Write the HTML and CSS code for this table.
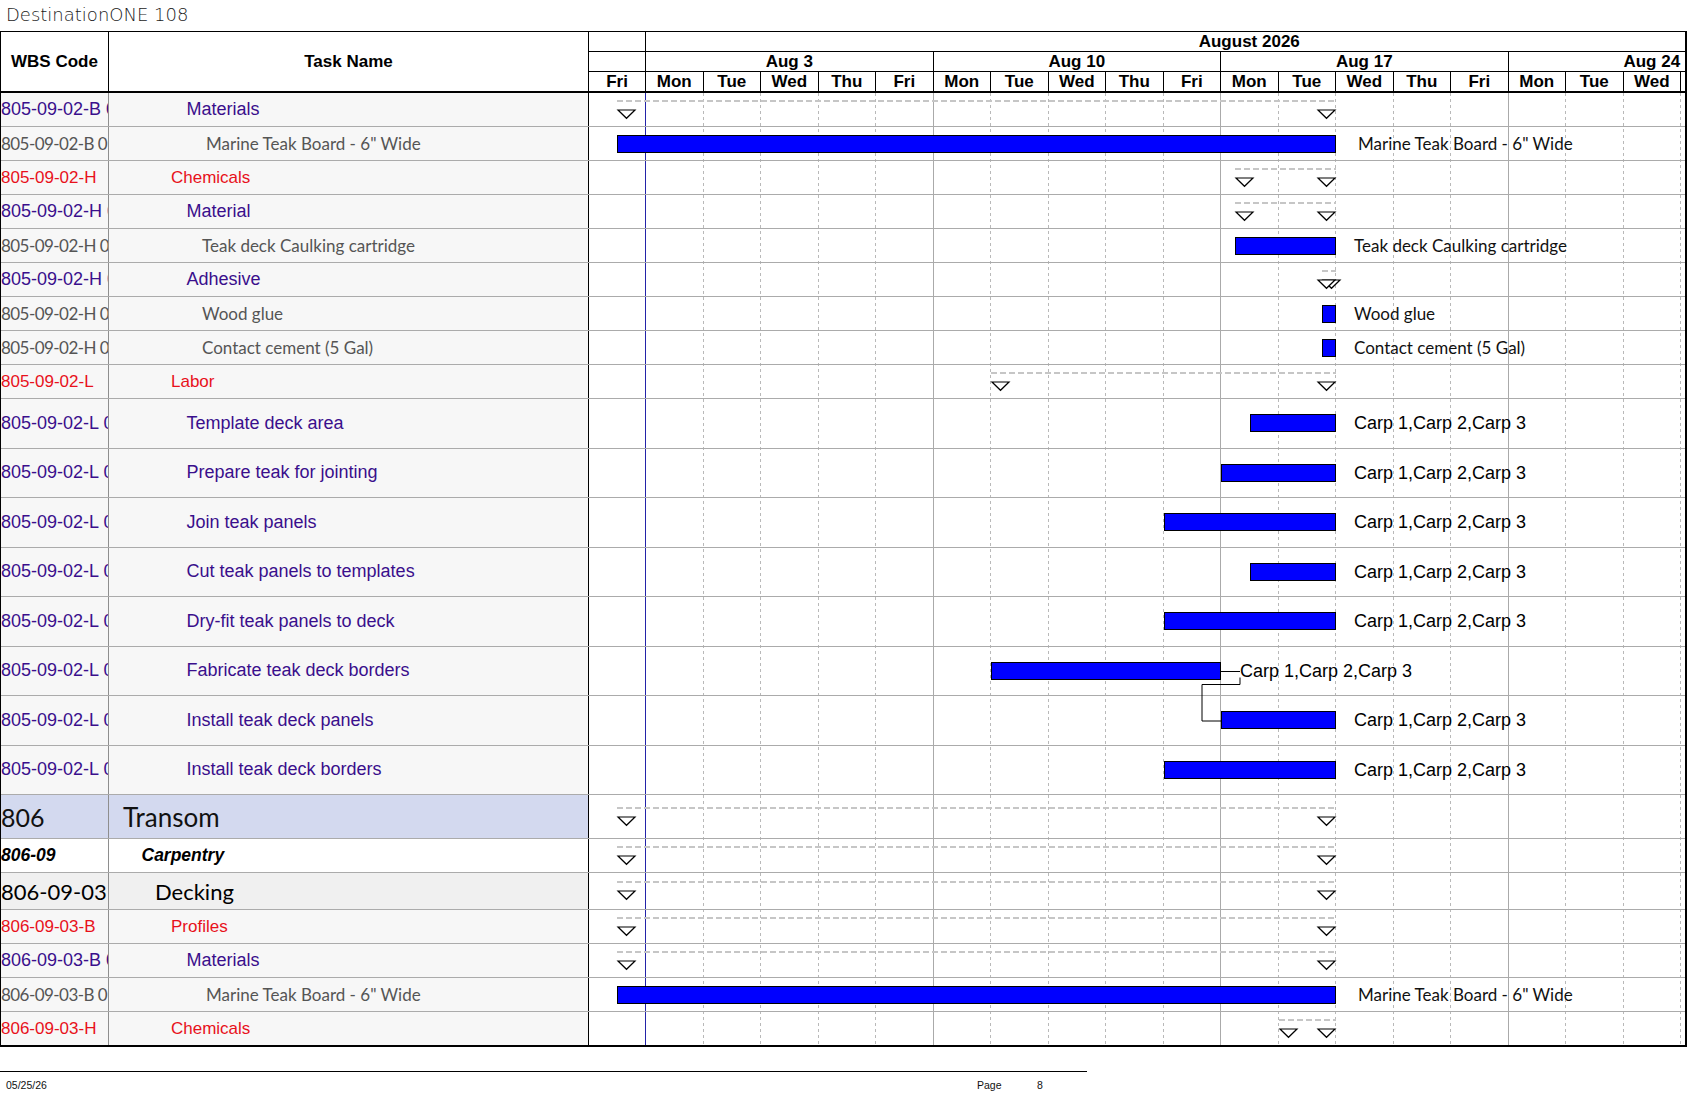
FILE: index.html
```html
<!DOCTYPE html>
<html lang="en">
<head>
<meta charset="utf-8">
<title>DestinationONE 108</title>
<link rel="stylesheet" href="styles.css">
</head>
<body>
<div class="title">DestinationONE 108</div>
<div class="sheet">
  <div class="left">
    <div class="lhead">
      <div class="hc wbs">WBS Code</div>
      <div class="hc task">Task Name</div>
    </div>
    <div class="lrow h34"><div class="c pur">805-09-02-B 01</div><div class="t pur i-pur">Materials</div></div>
    <div class="lrow h34"><div class="c gry">805-09-02-B 0101</div><div class="t gry i-gry2">Marine Teak Board - 6" Wide</div></div>
    <div class="lrow h34"><div class="c red">805-09-02-H</div><div class="t red i-red">Chemicals</div></div>
    <div class="lrow h34"><div class="c pur">805-09-02-H 01</div><div class="t pur i-pur">Material</div></div>
    <div class="lrow h34"><div class="c gry">805-09-02-H 0101</div><div class="t gry i-gry">Teak deck Caulking cartridge</div></div>
    <div class="lrow h34"><div class="c pur">805-09-02-H 02</div><div class="t pur i-pur">Adhesive</div></div>
    <div class="lrow h34"><div class="c gry">805-09-02-H 0201</div><div class="t gry i-gry">Wood glue</div></div>
    <div class="lrow h34"><div class="c gry">805-09-02-H 0202</div><div class="t gry i-gry">Contact cement (5 Gal)</div></div>
    <div class="lrow h34"><div class="c red">805-09-02-L</div><div class="t red i-red">Labor</div></div>
    <div class="lrow h49"><div class="c pur">805-09-02-L 01</div><div class="t pur i-pur">Template deck area</div></div>
    <div class="lrow h49"><div class="c pur">805-09-02-L 02</div><div class="t pur i-pur">Prepare teak for jointing</div></div>
    <div class="lrow h49"><div class="c pur">805-09-02-L 03</div><div class="t pur i-pur">Join teak panels</div></div>
    <div class="lrow h49"><div class="c pur">805-09-02-L 04</div><div class="t pur i-pur">Cut teak panels to templates</div></div>
    <div class="lrow h49"><div class="c pur">805-09-02-L 05</div><div class="t pur i-pur">Dry-fit teak panels to deck</div></div>
    <div class="lrow h49"><div class="c pur">805-09-02-L 06</div><div class="t pur i-pur">Fabricate teak deck borders</div></div>
    <div class="lrow h49"><div class="c pur">805-09-02-L 07</div><div class="t pur i-pur">Install teak deck panels</div></div>
    <div class="lrow h49"><div class="c pur">805-09-02-L 08</div><div class="t pur i-pur">Install teak deck borders</div></div>
    <div class="lrow h44 bg-l1"><div class="c l1">806</div><div class="t l1 i-l1">Transom</div></div>
    <div class="lrow h34 bg-l2"><div class="c l2">806-09</div><div class="t l2 i-l2">Carpentry</div></div>
    <div class="lrow h37 bg-l3"><div class="c l3">806-09-03</div><div class="t l3 i-l3">Decking</div></div>
    <div class="lrow h34"><div class="c red">806-09-03-B</div><div class="t red i-red">Profiles</div></div>
    <div class="lrow h34"><div class="c pur">806-09-03-B 01</div><div class="t pur i-pur">Materials</div></div>
    <div class="lrow h34"><div class="c gry">806-09-03-B 0101</div><div class="t gry i-gry2">Marine Teak Board - 6" Wide</div></div>
    <div class="lrow h34"><div class="c red">806-09-03-H</div><div class="t red i-red">Chemicals</div></div>
  </div>

  <div class="chart">
    <div class="chead">
      <div class="hrow m">
        <div class="hcell w-fri"></div>
        <div class="hcell w-month">August 2026</div>
      </div>
      <div class="hrow w">
        <div class="hcell w-fri"></div>
        <div class="hcell w-week">Aug 3</div>
        <div class="hcell w-week">Aug 10</div>
        <div class="hcell w-week">Aug 17</div>
        <div class="hcell w-week">Aug 24</div>
      </div>
      <div class="hrow d">
        <div class="hcell w-fri">Fri</div>
        <div class="hcell w-day">Mon</div><div class="hcell w-day">Tue</div><div class="hcell w-day">Wed</div><div class="hcell w-day">Thu</div><div class="hcell w-day">Fri</div>
        <div class="hcell w-day">Mon</div><div class="hcell w-day">Tue</div><div class="hcell w-day">Wed</div><div class="hcell w-day">Thu</div><div class="hcell w-day">Fri</div>
        <div class="hcell w-day">Mon</div><div class="hcell w-day">Tue</div><div class="hcell w-day">Wed</div><div class="hcell w-day">Thu</div><div class="hcell w-day">Fri</div>
        <div class="hcell w-day">Mon</div><div class="hcell w-day">Tue</div><div class="hcell w-day">Wed</div><div class="hcell w-day">Thu</div>
      </div>
    </div>

    <div class="cbody">
      <div class="cgrid">
        <div class="gcol first today"></div>
        <div class="gcol"></div><div class="gcol"></div><div class="gcol"></div><div class="gcol"></div><div class="gcol wk"></div>
        <div class="gcol"></div><div class="gcol"></div><div class="gcol"></div><div class="gcol"></div><div class="gcol wk"></div>
        <div class="gcol"></div><div class="gcol"></div><div class="gcol"></div><div class="gcol"></div><div class="gcol wk"></div>
        <div class="gcol"></div><div class="gcol"></div><div class="gcol"></div><div class="gcol"></div>
      </div>

      <div class="crow h34"><div class="sum" style="left:28.25px;width:718.75px"><svg class="tri s" viewBox="0 0 19 10"><path d="M1 1H18L9.5 9.3Z"/></svg><svg class="tri e" viewBox="0 0 19 10"><path d="M1 1H18L9.5 9.3Z"/></svg></div></div>
      <div class="crow h34"><div class="bar" style="left:28.25px;width:718.75px"></div><div class="lbl cal" style="left:769px">Marine Teak Board - 6" Wide</div></div>
      <div class="crow h34"><div class="sum" style="left:646.4px;width:100.6px"><svg class="tri s" viewBox="0 0 19 10"><path d="M1 1H18L9.5 9.3Z"/></svg><svg class="tri e" viewBox="0 0 19 10"><path d="M1 1H18L9.5 9.3Z"/></svg></div></div>
      <div class="crow h34"><div class="sum" style="left:646.4px;width:100.6px"><svg class="tri s" viewBox="0 0 19 10"><path d="M1 1H18L9.5 9.3Z"/></svg><svg class="tri e" viewBox="0 0 19 10"><path d="M1 1H18L9.5 9.3Z"/></svg></div></div>
      <div class="crow h34"><div class="bar" style="left:646.4px;width:100.6px"></div><div class="lbl cal" style="left:765px">Teak deck Caulking cartridge</div></div>
      <div class="crow h34"><div class="sum" style="left:732.6px;width:14.4px"><svg class="tri s" viewBox="0 0 19 10"><path d="M1 1H18L9.5 9.3Z"/></svg><svg class="tri e" viewBox="0 0 19 10"><path d="M1 1H18L9.5 9.3Z"/></svg></div></div>
      <div class="crow h34"><div class="bar" style="left:732.6px;width:14.4px"></div><div class="lbl cal" style="left:765px">Wood glue</div></div>
      <div class="crow h34"><div class="bar" style="left:732.6px;width:14.4px"></div><div class="lbl cal" style="left:765px">Contact cement (5 Gal)</div></div>
      <div class="crow h34"><div class="sum" style="left:402px;width:345px"><svg class="tri s" viewBox="0 0 19 10"><path d="M1 1H18L9.5 9.3Z"/></svg><svg class="tri e" viewBox="0 0 19 10"><path d="M1 1H18L9.5 9.3Z"/></svg></div></div>
      <div class="crow h49"><div class="bar" style="left:660.75px;width:86.25px"></div><div class="lbl" style="left:765px">Carp 1,Carp 2,Carp 3</div></div>
      <div class="crow h49"><div class="bar" style="left:632px;width:115px"></div><div class="lbl" style="left:765px">Carp 1,Carp 2,Carp 3</div></div>
      <div class="crow h49"><div class="bar" style="left:574.5px;width:172.5px"></div><div class="lbl" style="left:765px">Carp 1,Carp 2,Carp 3</div></div>
      <div class="crow h49"><div class="bar" style="left:660.75px;width:86.25px"></div><div class="lbl" style="left:765px">Carp 1,Carp 2,Carp 3</div></div>
      <div class="crow h49"><div class="bar" style="left:574.5px;width:172.5px"></div><div class="lbl" style="left:765px">Carp 1,Carp 2,Carp 3</div></div>
      <div class="crow h49">
        <div class="bar" style="left:402px;width:230px"></div>
        <svg class="link" viewBox="0 0 60 80"><path d="M32 24.5H51M51 30.5V37.5H13V74H32"/></svg>
        <div class="lbl" style="left:651px">Carp 1,Carp 2,Carp 3</div>
      </div>
      <div class="crow h49"><div class="bar" style="left:632px;width:115px"></div><div class="lbl" style="left:765px">Carp 1,Carp 2,Carp 3</div></div>
      <div class="crow h49"><div class="bar" style="left:574.5px;width:172.5px"></div><div class="lbl" style="left:765px">Carp 1,Carp 2,Carp 3</div></div>
      <div class="crow h44"><div class="sum" style="left:28.25px;width:718.75px"><svg class="tri s" viewBox="0 0 19 10"><path d="M1 1H18L9.5 9.3Z"/></svg><svg class="tri e" viewBox="0 0 19 10"><path d="M1 1H18L9.5 9.3Z"/></svg></div></div>
      <div class="crow h34"><div class="sum" style="left:28.25px;width:718.75px"><svg class="tri s" viewBox="0 0 19 10"><path d="M1 1H18L9.5 9.3Z"/></svg><svg class="tri e" viewBox="0 0 19 10"><path d="M1 1H18L9.5 9.3Z"/></svg></div></div>
      <div class="crow h37"><div class="sum" style="left:28.25px;width:718.75px"><svg class="tri s" viewBox="0 0 19 10"><path d="M1 1H18L9.5 9.3Z"/></svg><svg class="tri e" viewBox="0 0 19 10"><path d="M1 1H18L9.5 9.3Z"/></svg></div></div>
      <div class="crow h34"><div class="sum" style="left:28.25px;width:718.75px"><svg class="tri s" viewBox="0 0 19 10"><path d="M1 1H18L9.5 9.3Z"/></svg><svg class="tri e" viewBox="0 0 19 10"><path d="M1 1H18L9.5 9.3Z"/></svg></div></div>
      <div class="crow h34"><div class="sum" style="left:28.25px;width:718.75px"><svg class="tri s" viewBox="0 0 19 10"><path d="M1 1H18L9.5 9.3Z"/></svg><svg class="tri e" viewBox="0 0 19 10"><path d="M1 1H18L9.5 9.3Z"/></svg></div></div>
      <div class="crow h34"><div class="bar" style="left:28.25px;width:718.75px"></div><div class="lbl cal" style="left:769px">Marine Teak Board - 6" Wide</div></div>
      <div class="crow h34"><div class="sum" style="left:689.5px;width:57.5px"><svg class="tri s" viewBox="0 0 19 10"><path d="M1 1H18L9.5 9.3Z"/></svg><svg class="tri e" viewBox="0 0 19 10"><path d="M1 1H18L9.5 9.3Z"/></svg></div></div>
    </div>
  </div>
</div>
<div class="foot">
  <span class="f-date">05/25/26</span>
  <span class="f-page">Page</span>
  <span class="f-num">8</span>
</div>
</body>
</html>
```

FILE: styles.css
```css
* { box-sizing: border-box; }

body {
  margin: 0;
  width: 1687px;
  height: 1097px;
  overflow: hidden;
  background: #fff;
  font-family: "Liberation Sans", Arial, sans-serif;
  color: #000;
}

.title {
  height: 31px;
  padding-left: 6px;
  font-family: "DejaVu Sans", sans-serif;
  font-weight: 200;
  font-size: 18px;
  line-height: 30px;
  color: #1a1a1a;
}

.sheet {
  display: flex;
  width: 1687px;
  border-top: 1px solid #000;
  border-left: 1px solid #000;
  border-right: 2px solid #000;
  border-bottom: 2px solid #000;
}

/* left table */
.left { width: 588px; flex: none; }

.lhead {
  display: flex;
  height: 61px;
  border-bottom: 2px solid #000;
}
.hc {
  display: flex;
  align-items: center;
  justify-content: center;
  font-weight: bold;
  font-size: 17px;
}
.hc.wbs { width: 108px; border-right: 1px solid #000; }
.hc.task { width: 480px; border-right: 1px solid #000; }

.lrow {
  display: flex;
  background: #f7f7f7;
  border-bottom: 1px solid #ababab;
}
.lrow:last-child { border-bottom: 0; height: 33px; }

.lrow .c {
  width: 108px;
  flex: none;
  display: flex;
  align-items: center;
  white-space: nowrap;
  overflow: hidden;
  border-right: 1px solid #8e8e8e;
  padding-left: 0;
}
.lrow .t {
  width: 480px;
  flex: none;
  display: flex;
  align-items: center;
  white-space: nowrap;
  overflow: hidden;
  border-right: 1px solid #000;
}

.h34 { height: 34px; }
.h49 { height: 49.5px; }
.h44 { height: 44px; }
.h37 { height: 37px; }

.bg-l1 { background: #d3d9ef; }
.bg-l2 { background: #fff; }
.bg-l3 { background: #f0f0f0; }

.pur { color: #3a0f8c; font-size: 18px; }
.red { color: #e8111b; font-size: 17px; }
.gry { color: #555; font-family: Lato, "Liberation Sans", sans-serif; font-size: 17px; }
.c.gry { letter-spacing: -0.55px; }
.l1 { font-family: Lato, "Liberation Sans", sans-serif; font-size: 25px; color: #111; }
.t.l1 { font-size: 26px; }
.l2 { font-weight: bold; font-style: italic; font-size: 17.5px; color: #000; }
.l3 { font-family: Lato, "Liberation Sans", sans-serif; font-size: 22px; color: #000; }

.i-red { padding-left: 62px; }
.i-pur { padding-left: 77.5px; }
.i-gry { padding-left: 93px; }
.i-gry2 { padding-left: 97px; }
.i-l1 { padding-left: 14px; }
.i-l2 { padding-left: 32.5px; }
.i-l3 { padding-left: 46px; }

/* chart */
.chart { width: 1096px; flex: none; overflow: hidden; }

.chead { border-bottom: 2px solid #000; }
.hrow {
  display: flex;
  white-space: nowrap;
  overflow: hidden;
  font-weight: bold;
  font-size: 17px;
}
.hrow.m, .hrow.w { height: 20px; border-bottom: 1px solid #000; }
.hrow.d { height: 19px; }
.hcell {
  flex: none;
  border-right: 1px solid #000;
  text-align: center;
  line-height: 19px;
}
.w-fri { width: 57px; }
.w-day { width: 57.5px; }
.w-week { width: 287.5px; }
.w-month { width: 1207.5px; }

.cbody { position: relative; }
.cgrid {
  position: absolute;
  top: 0; bottom: 0; left: 0;
  display: flex;
}
.gcol { flex: none; width: 57.5px; position: relative; }
.gcol.first { width: 57px; }
.gcol::after {
  content: "";
  position: absolute;
  top: 0; bottom: 0; right: 0;
  width: 1px;
  background: repeating-linear-gradient(to bottom, #b9b9b9 0 3px, transparent 3px 6px);
}
.gcol.wk::after { background: #aaaaaa; }
.gcol.today::after { background: #2323a8; }

.crow {
  position: relative;
  border-bottom: 1px solid #ababab;
}
.crow:last-child { border-bottom: 0; height: 33px; }

.bar {
  position: absolute;
  top: 50%;
  height: 18px;
  margin-top: -9px;
  background: #0000ff;
  border: 1px solid #000;
}

.lbl {
  position: absolute;
  top: 50%;
  transform: translateY(-50%);
  white-space: nowrap;
  font-size: 18px;
  line-height: 20px;
  color: #000;
}
.lbl.cal {
  font-family: Lato, "Liberation Sans", sans-serif;
  font-size: 17px;
  color: #111;
}

.sum {
  position: absolute;
  top: 50%;
  height: 20px;
  margin-top: -10px;
}
.sum::before {
  content: "";
  position: absolute;
  left: 0; right: 0; top: 0;
  height: 2px;
  background: repeating-linear-gradient(to right, #c6c6c6 0 6px, transparent 6px 9px);
}
.tri {
  position: absolute;
  top: 9px;
  width: 19px;
  height: 10px;
  overflow: visible;
}
.tri.s { left: 0; }
.tri.e { right: 0; }
.tri path { fill: #fff; stroke: #000; stroke-width: 1.2; }

.link {
  position: absolute;
  left: 600px;
  top: 0;
  width: 60px;
  height: 80px;
  overflow: visible;
}
.link path { fill: none; stroke: #000; stroke-width: 1; }

/* footer */
.foot {
  margin-top: 24px;
  width: 1087px;
  border-top: 1px solid #000;
  padding-top: 7px;
  display: flex;
  font-size: 10.5px;
  color: #111;
}
.f-date { margin-left: 6px; width: 971px; }
.f-page { width: 60px; }
```
